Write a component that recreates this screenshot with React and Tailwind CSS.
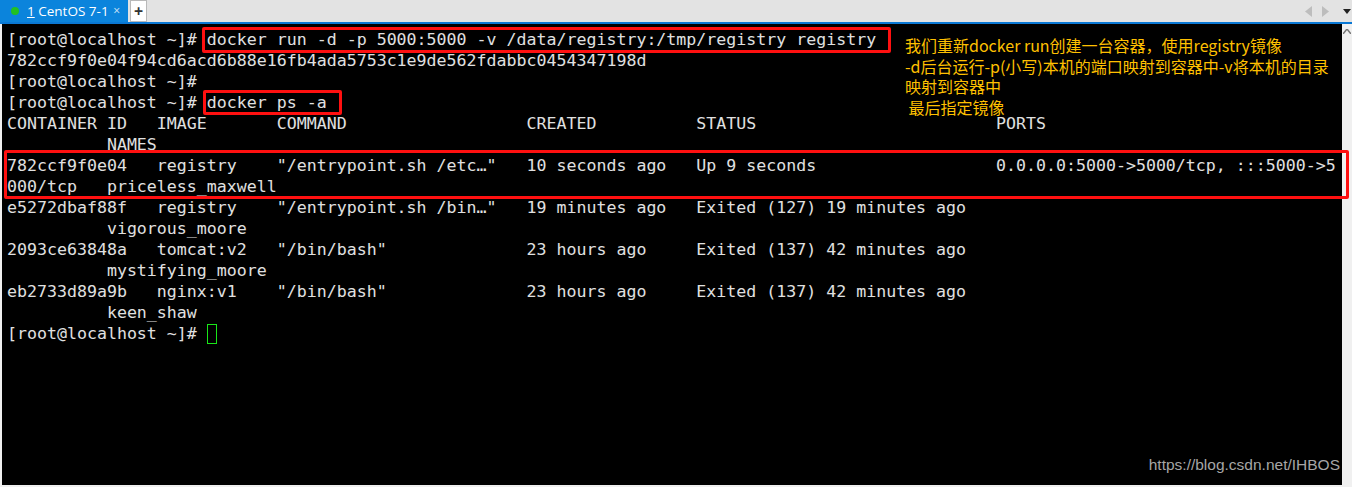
import React from "react";

const mono = { fontFamily: '"DejaVu Sans Mono", "Liberation Mono", monospace' };

// columns of `docker ps -a`: 0, 15, 27, 52, 69, 99
const row = (id, image, cmd, created, status, ports = "") =>
  id.padEnd(15) + image.padEnd(12) + cmd.padEnd(25) + created.padEnd(17) + (ports ? status.padEnd(30) + ports : status);

const psRow = row("782ccf9f0e04", "registry", "\"/entrypoint.sh /etc…\"", "10 seconds ago", "Up 9 seconds", "0.0.0.0:5000->5000/tcp, :::5000->5000/tcp");

const lines = [
  "[root@localhost ~]# docker run -d -p 5000:5000 -v /data/registry:/tmp/registry registry",
  "782ccf9f0e04f94cd6acd6b88e16fb4ada5753c1e9de562fdabbc0454347198d",
  "[root@localhost ~]# ",
  "[root@localhost ~]# docker ps -a",
  row("CONTAINER ID", "IMAGE", "COMMAND", "CREATED", "STATUS", "PORTS"),
  "          NAMES",
  psRow.slice(0, 133),
  psRow.slice(133) + "   priceless_maxwell",
  row("e5272dbaf88f", "registry", "\"/entrypoint.sh /bin…\"", "19 minutes ago", "Exited (127) 19 minutes ago"),
  "          vigorous_moore",
  row("2093ce63848a", "tomcat:v2", "\"/bin/bash\"", "23 hours ago", "Exited (137) 42 minutes ago"),
  "          mystifying_moore",
  row("eb2733d89a9b", "nginx:v1", "\"/bin/bash\"", "23 hours ago", "Exited (137) 42 minutes ago"),
  "          keen_shaw",
];

function TabBar() {
  return (
    <div className="flex h-[22px] items-stretch bg-[#e3e3e3]">
      <div className="flex w-[128px] items-center bg-[#0b84dc] pl-[11px] pr-[8px] text-[13.5px] text-white" style={{ fontFamily: '"Open Sans", "Noto Sans", sans-serif' }}>
        <span className="mr-[8px] h-[8px] w-[8px] shrink-0 rounded-full bg-[#22c022]" />
        <span className="whitespace-nowrap"><span className="underline">1</span> CentOS 7-1</span>
        <span className="ml-auto text-[12px] leading-none text-[#cfe6f8]">×</span>
      </div>
      <div className="ml-[2px] flex w-[17px] items-center justify-center border border-[#b9b9b9] bg-white text-[16px] font-bold leading-none text-[#333]">+</div>
      <div className="ml-auto flex items-center pr-[1px]">
        <svg width="8" height="11" viewBox="0 0 8 11" className="mr-[8px]"><path d="M7 0 L0 5.5 L7 11 Z" fill="#bdbdbd" /></svg>
        <svg width="8" height="11" viewBox="0 0 8 11" className="mr-[14px]"><path d="M1 0 L8 5.5 L1 11 Z" fill="#bdbdbd" /></svg>
        <svg width="8" height="5" viewBox="0 0 8 5"><path d="M0 0 L8 0 L4 5 Z" fill="#222" /></svg>
      </div>
    </div>
  );
}

function Terminal() {
  return (
    <div className="relative min-w-0 flex-1 bg-black pl-[5px] pt-[5px] text-[16.6px] leading-[21px] text-[#e0e0e0]" style={mono}>
      {lines.map((l, i) => (
        <div key={i} className="h-[21px] whitespace-pre">{l}</div>
      ))}
      <div className="flex h-[21px] items-center whitespace-pre">
        <span>[root@localhost ~]# </span>
        <span className="h-[20px] w-[10px] border border-[#19e619]" />
      </div>

      <div className="pointer-events-none absolute left-[200px] top-[3px] h-[26px] w-[689px] rounded-[2px] border-[3px] border-[#ff1010]" />
      <div className="pointer-events-none absolute left-[201px] top-[66px] h-[25px] w-[139px] rounded-[2px] border-[3px] border-[#ff1010]" />
      <div className="pointer-events-none absolute left-[2px] top-[126px] z-10 h-[49px] w-[1345px] rounded-[2px] border-[3px] border-[#ff1010]" />

      <div className="absolute left-[903px] top-[11px] text-[16px] leading-[20.7px] text-[#ffc000]" style={{ fontFamily: '"Microsoft YaHei", "Noto Sans CJK SC", sans-serif' }}>
        <div className="h-[20.7px]">我们重新docker run创建一台容器，使用registry镜像</div>
        <div className="h-[20.7px]">-d后台运行-p(小写)本机的端口映射到容器中-v将本机的目录</div>
        <div className="h-[20.7px]">映射到容器中</div>
        <div className="h-[20.7px] whitespace-pre"> 最后指定镜像</div>
      </div>

      <div className="absolute bottom-[10px] right-[2px] text-[15.5px] text-[#a6a6a6]" style={{ fontFamily: '"Liberation Sans", Arial, sans-serif' }}>
        https://blog.csdn.net/IHBOS
      </div>
    </div>
  );
}

export default function App() {
  return (
    <div className="flex h-[487px] w-[1352px] flex-col overflow-hidden bg-[#f0f0f0]">
      <TabBar />
      <div className="h-[2px] bg-[#0a78d4]" />
      <div className="flex min-h-0 flex-1 pb-[2px] pl-[2px]">
        <Terminal />
        <div className="flex w-[10px] shrink-0 flex-col items-center bg-[#f0f0f0] pt-[5px]">
          <svg width="8" height="5" viewBox="0 0 8 5"><path d="M0 5 L4 0 L8 5" fill="none" stroke="#777" strokeWidth="1.5" /></svg>
        </div>
      </div>
    </div>
  );
}
